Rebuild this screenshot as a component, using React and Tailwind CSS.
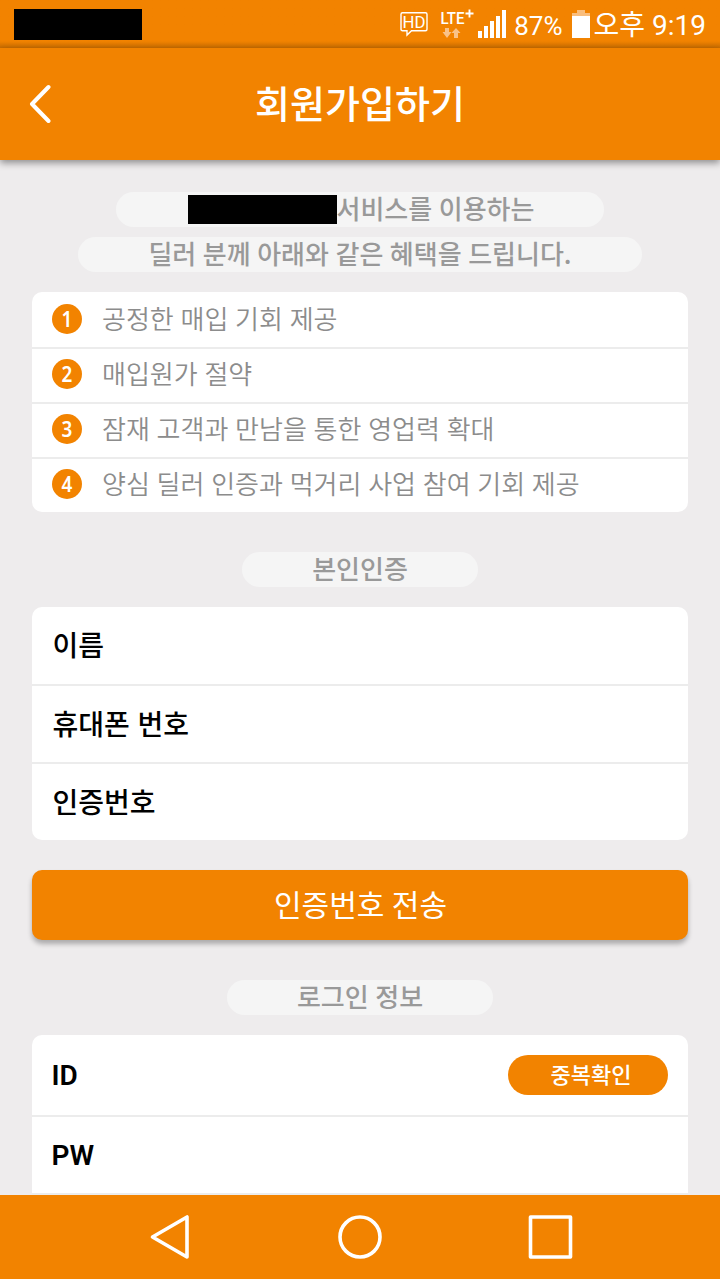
const benefits = [
  '공정한 매입 기회 제공',
  '매입원가 절약',
  '잠재 고객과 만남을 통한 영업력 확대',
  '양심 딜러 인증과 먹거리 사업 참여 기회 제공',
];

export default function App() {
  return (
    <div className="flex h-[1279px] w-[720px] flex-col overflow-hidden bg-[#eeeced] font-['Roboto','Noto_Sans_CJK_KR',sans-serif]">
      <StatusBar />
      <Header />
      <main className="min-h-0 flex-1 overflow-hidden px-8 pt-8">
        <div className="flex flex-col items-center gap-[10px]">
          <Pill className="w-[488px] pl-[2px]">
            <span className="mt-[3px] h-[29px] w-[149px] bg-black" />
            서비스를 이용하는
          </Pill>
          <Pill className="w-[564px]">딜러 분께 아래와 같은 혜택을 드립니다.</Pill>
        </div>

        <ol className="mt-5 overflow-hidden rounded-[10px] bg-white">
          {benefits.map((text, i) => (
            <li
              key={text}
              className="flex h-[55px] items-center border-t-2 border-[#ececec] pb-[3px] pl-5 first:border-t-0 first:pb-px"
            >
              <span className="flex size-[30px] items-center justify-center rounded-full bg-[#f28300] font-['Noto_Sans',sans-serif] text-[21px] leading-[30px] font-semibold text-white">
                <span className="scale-x-90">{i + 1}</span>
              </span>
              <span className="ml-5 pt-[2px] text-[26px] leading-[48px] font-[350] text-[#8c8c8c] [word-spacing:0.4px]">
                {text}
              </span>
            </li>
          ))}
        </ol>

        <div className="mt-10 flex justify-center">
          <Pill className="w-[236px]">본인인증</Pill>
        </div>

        <div className="mt-5 overflow-hidden rounded-[10px] bg-white">
          <Field label="이름" className="h-[79px] border-b-2 pt-[3px] font-medium" />
          <Field label="휴대폰 번호" className="h-[78px] border-b-2 pt-[3px] font-medium" />
          <Field label="인증번호" className="h-[76px] pt-[3px] font-medium" />
        </div>

        <button className="mt-[30px] flex h-[70px] w-full items-center justify-center rounded-[10px] bg-[#f28300] pt-px pl-px text-[30px] text-white shadow-[0_4px_5px_rgba(0,0,0,0.28)]">
          인증번호 전송
        </button>

        <div className="mt-10 flex justify-center">
          <Pill className="w-[266px]">로그인 정보</Pill>
        </div>

        <div className="mt-5 overflow-hidden rounded-t-[10px] bg-white">
          <Field label={<span className="relative top-px -ml-px">ID</span>} className="h-[82px] border-b-2 font-semibold">
            <button className="mr-5 flex h-10 w-40 items-center justify-center rounded-full bg-[#f28300] pt-px pl-[6px] text-[22px] font-medium text-white">
              중복확인
            </button>
          </Field>
          <Field label={<span className="relative top-px -ml-px">PW</span>} className="h-[78px] border-b-2 font-semibold" />
        </div>
      </main>
      <NavBar />
    </div>
  );
}

function Pill({ className, children }) {
  return (
    <div
      className={`flex h-[35px] items-center justify-center rounded-full bg-[#f5f5f5] pb-[4px] font-['Noto_Sans_CJK_KR',sans-serif] text-[26px] leading-[35px] font-medium whitespace-nowrap text-[#999] [word-spacing:0.7px] ${className}`}
    >
      {children}
    </div>
  );
}

function Field({ label, className, children }) {
  return (
    <div className={`flex items-center justify-between border-[#ececec] pl-[20.5px] ${className}`}>
      <span className="text-[28px] text-black [word-spacing:0.7px]">{label}</span>
      {children}
    </div>
  );
}

function StatusBar() {
  return (
    <div className="flex h-12 shrink-0 items-center justify-between bg-[#f28300] bg-linear-to-t from-[#c96d00] to-[#f28300] to-[7px] pr-[14px] pl-[14px] text-white">
      <span className="h-[31px] w-[128px] bg-black" />
      <div className="flex items-center">
        <svg width="28" height="26" viewBox="0 0 28 26" fill="none">
          <path
            d="M2.500 1.700h23q1.500 0 1.500 1.500v15q0 1.500-1.500 1.500H11.500L7 24v-4.300H2.500Q1 19.700 1 18.200v-15q0-1.500 1.500-1.500z"
            stroke="white"
            strokeWidth="1.400"
          />
          <text x="2.500" y="16.500" fill="white" fontSize="16.500" textLength="23" lengthAdjust="spacingAndGlyphs">
            HD
          </text>
        </svg>
        <svg width="34" height="32" viewBox="0 0 34 32" className="ml-3">
          <text x="0.500" y="16" fill="white" fontSize="16.500" fontWeight="500" textLength="24" lengthAdjust="spacingAndGlyphs">
            LTE
          </text>
          <path d="M29.500 1.500v8M25.500 5.500h8" stroke="white" strokeWidth="1.900" />
          <path d="M5 20h4v4h2.500L7 30l-4.500-6H5zM14 30h4v-5h2.500L16 20l-4.500 5H14z" fill="#f9c288" />
        </svg>
        <svg width="28" height="28" viewBox="0 0 28 28" fill="white" className="ml-1" shapeRendering="crispEdges">
          <rect x="0" y="21" width="4" height="7" />
          <rect x="6" y="16" width="4" height="12" />
          <rect x="12" y="11" width="4" height="17" />
          <rect x="18" y="6" width="4" height="22" />
          <rect x="24" y="0" width="4" height="28" />
        </svg>
        <span className="ml-2 pt-[3px] text-[26px] leading-8">87%</span>
        <svg width="18" height="28" viewBox="0 0 18 28" className="ml-[9px]" shapeRendering="crispEdges">
          <path d="M5 0h8v3h5v3H0V3h5z" fill="#f9bd7c" />
          <rect y="6" width="18" height="22" fill="white" />
        </svg>
        <span className="ml-1 pt-[4px] text-[28px] leading-8 whitespace-nowrap">오후 9:19</span>
      </div>
    </div>
  );
}

function Header() {
  return (
    <header className="grid h-28 shrink-0 grid-cols-[80px_1fr_80px] items-center bg-[#f28300] shadow-[0_3px_7px_rgba(0,0,0,0.4)]">
      <svg width="22" height="40" viewBox="0 0 22 40" fill="none" className="ml-[29px]">
        <path d="M19.500 3 3 20l16.500 17" stroke="white" strokeWidth="4" strokeLinecap="round" strokeLinejoin="round" />
      </svg>
      <h1 className="pt-[2px] text-center text-[38px] font-medium text-white">회원가입하기</h1>
    </header>
  );
}

function NavBar() {
  return (
    <nav className="h-[84px] shrink-0 bg-[#f28300]">
      <svg width="720" height="84" viewBox="0 0 720 84" fill="none" stroke="white" strokeWidth="3.600" strokeLinejoin="round">
        <path d="M152.500 42 187 22v40z" />
        <circle cx="360" cy="42" r="20" />
        <rect x="530.500" y="22" width="40" height="40" />
      </svg>
    </nav>
  );
}
